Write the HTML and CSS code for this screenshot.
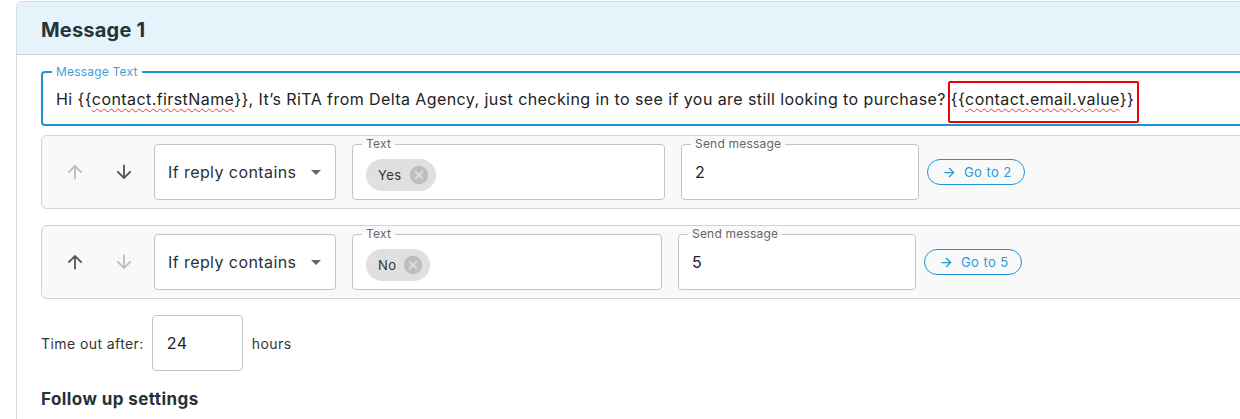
FILE: index.html
```html
<!DOCTYPE html>
<html lang="en">
<head>
  <meta charset="UTF-8">
  <meta name="viewport" content="width=device-width, initial-scale=1.0">
  <title>Message 1</title>
  <link rel="stylesheet" href="styles.css">
</head>
<body>

<div class="card">
  <div class="card-header">
    <h2>Message 1</h2>
  </div>
  <div class="card-body">
    <fieldset class="field field-message">
      <legend>Message Text</legend>
      <div class="field-value">Hi {{<span class="misspelt">contact.firstName</span>}}, It’s RiTA from Delta Agency, just checking in to see if you are still looking to purchase? <span class="highlight">{{<span class="misspelt">contact.email.value</span>}}</span></div>
    </fieldset>

    <div class="rule">
      <div class="move">
        <button class="move-btn disabled"><svg viewBox="0 0 24 24"><path d="M4 12l1.41 1.41L11 7.83V20h2V7.83l5.58 5.59L20 12l-8-8-8 8z"/></svg></button>
        <button class="move-btn"><svg viewBox="0 0 24 24"><path d="M20 12l-1.41-1.41L13 16.17V4h-2v12.17l-5.58-5.59L4 12l8 8 8-8z"/></svg></button>
      </div>
      <div class="select">If reply contains <span class="caret"></span></div>
      <fieldset class="field field-text">
        <legend>Text</legend>
        <div class="field-value">
          <span class="chip">Yes <svg viewBox="0 0 24 24"><path d="M12 2C6.47 2 2 6.47 2 12s4.47 10 10 10 10-4.47 10-10S17.53 2 12 2zm5 13.59L15.59 17 12 13.41 8.41 17 7 15.59 10.59 12 7 8.41 8.41 7 12 10.59 15.59 7 17 8.41 13.41 12 17 15.59z"/></svg></span>
        </div>
      </fieldset>
      <fieldset class="field field-send">
        <legend>Send message</legend>
        <div class="field-value">2</div>
      </fieldset>
      <div class="goto-wrap">
        <button class="goto"><svg viewBox="0 0 24 24"><path d="M12 4l-1.41 1.41L16.17 11H4v2h12.17l-5.58 5.59L12 20l8-8z"/></svg>Go to 2</button>
      </div>
    </div>

    <div class="rule rule-narrow">
      <div class="move">
        <button class="move-btn"><svg viewBox="0 0 24 24"><path d="M4 12l1.41 1.41L11 7.83V20h2V7.83l5.58 5.59L20 12l-8-8-8 8z"/></svg></button>
        <button class="move-btn disabled"><svg viewBox="0 0 24 24"><path d="M20 12l-1.41-1.41L13 16.17V4h-2v12.17l-5.58-5.59L4 12l8 8 8-8z"/></svg></button>
      </div>
      <div class="select">If reply contains <span class="caret"></span></div>
      <fieldset class="field field-text">
        <legend>Text</legend>
        <div class="field-value">
          <span class="chip">No <svg viewBox="0 0 24 24"><path d="M12 2C6.47 2 2 6.47 2 12s4.47 10 10 10 10-4.47 10-10S17.53 2 12 2zm5 13.59L15.59 17 12 13.41 8.41 17 7 15.59 10.59 12 7 8.41 8.41 7 12 10.59 15.59 7 17 8.41 13.41 12 17 15.59z"/></svg></span>
        </div>
      </fieldset>
      <fieldset class="field field-send">
        <legend>Send message</legend>
        <div class="field-value">5</div>
      </fieldset>
      <div class="goto-wrap">
        <button class="goto"><svg viewBox="0 0 24 24"><path d="M12 4l-1.41 1.41L16.17 11H4v2h12.17l-5.58 5.59L12 20l8-8z"/></svg>Go to 5</button>
      </div>
    </div>

    <div class="timeout">
      <span>Time out after:</span>
      <div class="timeout-input">24</div>
      <span>hours</span>
    </div>

    <h3>Follow up settings</h3>
  </div>
</div>

</body>
</html>
```

FILE: styles.css
```css
body {
  font-family: Inter, "Open Sans", sans-serif;
  letter-spacing: 0.42px;
  margin: 0;
  padding: 0;
  background-color: #fff;
  color: #263238;
  overflow: hidden;
}

.card {
  margin: 1px 0 0 16px;
  width: 1260px;
  border: 1px solid #d3dbdf;
  border-radius: 6px;
  min-height: 440px;
}

.card-header {
  height: 52px;
  display: flex;
  align-items: center;
  padding: 0 24px;
  background-color: #e5f4fa;
  border-bottom: 1px solid #c9d3d8;
  border-radius: 6px 6px 0 0;
}

.card-header h2 {
  margin: 3px 0 0;
  font-size: 20px;
  font-weight: 700;
  letter-spacing: 0.2px;
  color: #263238;
}

.card-body {
  padding: 10px 24px 0;
}

/* outlined fields */
.field {
  margin: 0;
  padding: 0 13px;
  border: 1px solid #c4c4c4;
  border-radius: 4px;
  background-color: #fff;
  min-width: 0;
  box-sizing: border-box;
}

.field legend {
  font-size: 12px;
  line-height: 14px;
  letter-spacing: 0.2px;
  padding: 0 4px;
  margin-left: -4px;
  color: #666;
}

.field-value {
  height: 48px;
  box-sizing: border-box;
  display: flex;
  align-items: center;
  font-size: 16px;
  color: #222;
}

.field-send .field-value {
  padding-bottom: 7px;
}

.field-message {
  border: 2px solid #1f95d4;
}

.field-message legend {
  color: #3d9fd8;
}

.field-message .field-value {
  display: block;
  height: 45px;
  padding: 8px 0 13px;
  line-height: 24px;
  white-space: nowrap;
}

.misspelt {
  text-decoration: underline wavy #e53935;
  text-decoration-thickness: 1px;
  text-underline-offset: 3px;
}

.highlight {
  position: relative;
}

.highlight::after {
  content: "";
  position: absolute;
  left: -3px;
  right: -5px;
  top: -8px;
  bottom: -14px;
  border: 2px solid #f00000;
  border-radius: 2px;
}

/* rule rows */
.rule {
  display: flex;
  align-items: flex-end;
  height: 74px;
  box-sizing: border-box;
  margin-top: 9px;
  padding: 0 0 8px 8px;
  background-color: #f9f9f9;
  border: 1px solid #d2d2d2;
  border-radius: 6px;
}

.rule + .rule {
  margin-top: 16px;
}

.move {
  display: flex;
  height: 56px;
  align-items: center;
  margin-right: 6px;
}

.move-btn {
  width: 49px;
  height: 40px;
  padding: 0;
  border: none;
  background: none;
  cursor: pointer;
  display: flex;
  justify-content: center;
  align-items: center;
}

.move-btn svg {
  width: 22px;
  height: 22px;
  fill: #555;
}

.move-btn.disabled svg {
  fill: #bdbdbd;
}

.select {
  width: 182px;
  height: 56px;
  box-sizing: border-box;
  display: flex;
  align-items: center;
  justify-content: space-between;
  padding: 0 14px 0 13px;
  background-color: #fff;
  border: 1px solid #c4c4c4;
  border-radius: 4px;
  font-size: 16px;
  color: #263238;
  margin-right: 16px;
}

.caret {
  width: 0;
  height: 0;
  border-left: 5px solid transparent;
  border-right: 5px solid transparent;
  border-top: 5px solid #666;
}

.field-text {
  width: 313px;
  margin-right: 16px;
}

.field-send {
  width: 238px;
  margin-right: 8px;
}

.rule-narrow .field-text {
  width: 310px;
}

.chip {
  display: inline-flex;
  align-items: center;
  height: 32px;
  padding: 0 6px 0 12px;
  border-radius: 16px;
  background-color: #e0e0e0;
  font-size: 13px;
  color: #333;
}

.chip svg {
  width: 22px;
  height: 22px;
  margin-left: 6px;
  fill: #bdbdbd;
}

.goto-wrap {
  height: 56px;
  display: flex;
  align-items: center;
}

.goto {
  display: flex;
  align-items: center;
  height: 26px;
  padding: 0 12px 0 14px;
  border: 1px solid #2196d3;
  border-radius: 13px;
  background: none;
  color: #2b9ad6;
  font-family: inherit;
  letter-spacing: inherit;
  font-size: 13px;
  cursor: pointer;
}

.goto svg {
  width: 15px;
  height: 15px;
  fill: #2196d3;
  margin-right: 7px;
}

/* timeout */
.timeout {
  display: flex;
  align-items: center;
  margin-top: 16px;
  font-size: 14px;
  color: #333;
}

.timeout-input {
  width: 91px;
  height: 56px;
  box-sizing: border-box;
  margin: 0 9px 0 8px;
  padding-left: 14px;
  display: flex;
  align-items: center;
  border: 1px solid #c4c4c4;
  border-radius: 4px;
  font-size: 16px;
  color: #222;
}

.card-body h3 {
  margin: 18px 0 0;
  font-size: 17px;
  font-weight: 700;
  color: #263238;
}
```
